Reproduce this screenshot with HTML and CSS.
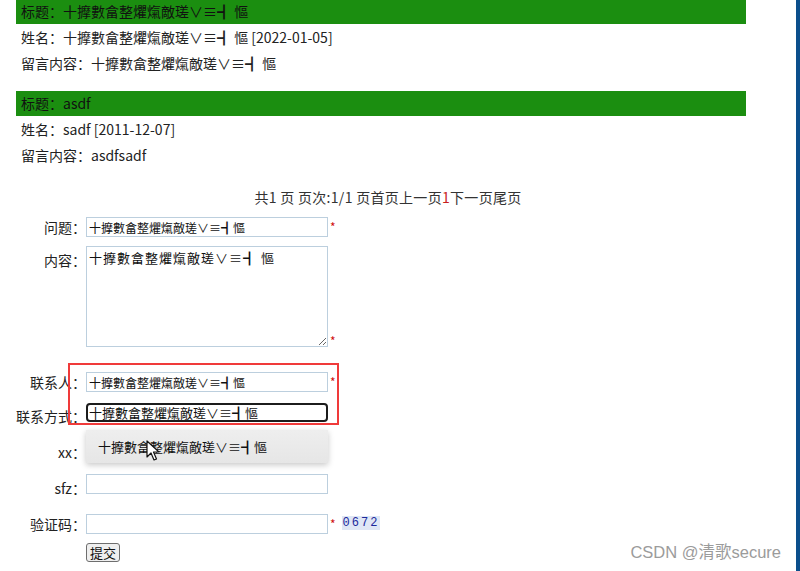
FILE: index.html
```html
<!DOCTYPE html>
<html lang="zh-CN">
  <head>
    <meta charset="UTF-8" />
    <meta name="viewport" content="width=device-width, initial-scale=1.0" />
    <title>留言板</title>
    <link rel="stylesheet" href="styles.css">
  </head>
  <body>
    <div class="page">
      <div class="messages">
        <div class="msg">
          <div class="msg-title">标题：十擵數畣整爠熂敵瑳∨≡┫ 慪</div>
          <div class="msg-line">姓名：十擵數畣整爠熂敵瑳∨≡┫ 慪 [2022-01-05]</div>
          <div class="msg-line">留言内容：十擵數畣整爠熂敵瑳∨≡┫ 慪</div>
        </div>
        <div class="msg">
          <div class="msg-title">标题：asdf</div>
          <div class="msg-line">姓名：sadf [2011-12-07]</div>
          <div class="msg-line">留言内容：asdfsadf</div>
        </div>
      </div>

      <div class="pager">共1 页 页次:1/1 页首页上一页<span class="cur">1</span>下一页尾页</div>

      <form class="guestbook">
        <div class="row">
          <label>问题：</label>
          <input type="text" value="十擵數畣整爠熂敵瑳∨≡┫慪">
          <span class="star">*</span>
        </div>
        <div class="row row-area">
          <label>内容：</label>
          <textarea>十擵數畣整爠熂敵瑳∨≡┫ 慪</textarea>
          <span class="star">*</span>
        </div>
        <div class="row row-contact">
          <label>联系人：</label>
          <input type="text" value="十擵數畣整爠熂敵瑳∨≡┫慪">
          <span class="star">*</span>
        </div>
        <div class="row row-way">
          <label class="low">联系方式：</label>
          <div class="field-wrap">
            <input type="text" class="is-focus" value="十擵數畣整爠熂敵瑳∨≡┫慪">
            <div class="suggest">十擵數畣整爠熂敵瑳∨≡┫慪</div>
          </div>
        </div>
        <div class="row row-xx">
          <label class="low">xx：</label>
          <input type="text">
        </div>
        <div class="row row-sfz">
          <label class="low">sfz：</label>
          <input type="text">
        </div>
        <div class="row row-code">
          <label>验证码：</label>
          <input type="text">
          <span class="star">*</span>
          <span class="code">0672</span>
        </div>
        <div class="row row-submit">
          <label></label>
          <button type="button">提交</button>
        </div>
      </form>

      <div class="highlight"></div>
      <svg class="mouse" width="14" height="22" viewBox="0 0 14 22">
        <path d="M1 1 L1 17 L5 13 L8 20 L10.5 19 L7.5 12 L13 12 Z" fill="#fff" stroke="#111" stroke-width="1.2" stroke-linejoin="round"/>
      </svg>
      <div class="watermark">CSDN @清歌secure</div>
    </div>
  </body>
</html>
```
FILE: styles.css
```css
html,
body {
  margin: 0;
  padding: 0;
}
body {
  font-family: "Noto Sans CJK SC", sans-serif;
  font-size: 14px;
  color: #222;
  background: #ffffff;
}
.page {
  position: relative;
  width: 800px;
  height: 571px;
  overflow: hidden;
  box-sizing: border-box;
  border-right: 4px solid #0b4f8c;
}
.messages {
  width: 730px;
  margin-left: 16px;
  margin-top: -1px;
}
.msg + .msg {
  margin-top: 15px;
}
.msg-title {
  height: 25px;
  line-height: 25px;
  padding-left: 5px;
  background-color: #1b8e10;
  color: #111;
}
.msg-line {
  height: 26px;
  line-height: 26px;
  padding-left: 5px;
}
.pager {
  width: 744px;
  margin-left: 16px;
  margin-top: 17px;
  line-height: 24px;
  text-align: center;
  color: #333;
  letter-spacing: 0.3px;
}
.pager .cur {
  color: #c81e1e;
}
.guestbook {
  margin-top: 8px;
  padding-left: 12px;
}
.row {
  display: flex;
  align-items: center;
}
.row label {
  width: 74px;
  line-height: 20px;
  text-align: right;
  flex-shrink: 0;
}
.row label.low {
  margin-bottom: -8px;
}
.row input {
  width: 242px;
  height: 20px;
  box-sizing: border-box;
  border: 1px solid #bccfde;
  padding: 0 2px;
  font-family: "Noto Sans CJK SC", sans-serif;
  font-size: 12px;
  color: #111;
  outline: none;
}
.row input.is-focus {
  height: 19px;
  border: 2px solid #1c1c1c;
  border-radius: 4px;
  font-size: 13px;
  padding: 0 1px;
}
.star {
  margin-left: 2px;
  margin-bottom: 2px;
  color: #d01010;
  font-size: 12px;
}
.row-area {
  align-items: flex-start;
  margin-top: 9px;
}
.row-area label {
  padding-top: 4px;
}
.row-area .star {
  align-self: flex-end;
  margin-bottom: -2px;
}
textarea {
  width: 242px;
  height: 101px;
  box-sizing: border-box;
  border: 1px solid #bccfde;
  padding: 1px 2px;
  font-family: "Noto Sans CJK SC", sans-serif;
  font-size: 13px;
  letter-spacing: 1px;
  color: #111;
  resize: both;
}
.row-contact {
  margin-top: 25px;
}
.row-way {
  margin-top: 10px;
}
.field-wrap {
  position: relative;
}
.suggest {
  position: absolute;
  top: 28px;
  left: 0;
  z-index: 2;
  width: 242px;
  height: 33px;
  box-sizing: border-box;
  padding-left: 12px;
  line-height: 33px;
  font-size: 13px;
  color: #111;
  background: linear-gradient(#eeeeee, #e6e6e6);
  box-shadow: 0 2px 6px rgba(0, 0, 0, 0.22);
}
.row-xx {
  margin-top: 16px;
}
.row-sfz {
  margin-top: 16px;
}
.row-code {
  margin-top: 20px;
}
.code {
  margin-left: 6px;
  margin-bottom: 2px;
  padding: 0 1px;
  font-family: "Liberation Mono", monospace;
  font-size: 12px;
  letter-spacing: 2px;
  color: #1c2a9c;
  background-color: #dfe7f5;
}
.row-submit {
  margin-top: 9px;
}
.row-submit button {
  height: 19px;
  padding: 0 3px;
  font-family: "Noto Sans CJK SC", sans-serif;
  font-size: 13px;
  line-height: 15px;
  color: #111;
  background-color: #efefef;
  border: 1px solid #6e6e6e;
  border-radius: 3px;
}
.highlight {
  position: absolute;
  left: 68px;
  top: 363px;
  width: 271px;
  height: 62px;
  box-sizing: border-box;
  border: 2px solid #f03a3a;
}
.mouse {
  position: absolute;
  left: 146px;
  top: 440px;
  z-index: 3;
}
.watermark {
  position: absolute;
  right: 15px;
  bottom: 8px;
  font-family: "Liberation Sans", "Noto Sans CJK SC", sans-serif;
  font-size: 16.5px;
  color: #9b9b9b;
}
```
